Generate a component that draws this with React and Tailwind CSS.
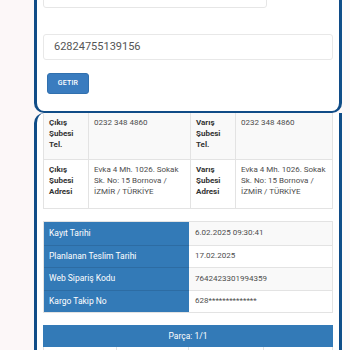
const infoRows = [
  { label: "Kayıt Tarihi", value: "6.02.2025 09:30:41" },
  { label: "Planlanan Teslim Tarihi", value: "17.02.2025" },
  { label: "Web Sipariş Kodu", value: "7642423301994359" },
  { label: "Kargo Takip No", value: "628**************" },
];

const Label = ({ lines }) => (
  <div className="px-[5px] pt-[4px] font-bold text-[#333] text-[8px] leading-[11px]">
    {lines.map((l) => (
      <div key={l}>{l}</div>
    ))}
  </div>
);

const Value = ({ lines, border = true }) => (
  <div
    className={`px-[5px] pt-[4px] text-[#4d4d4d] text-[8px] leading-[11px] whitespace-nowrap ${
      border ? "border-r border-[#e3e3e3]" : ""
    }`}
  >
    {lines.map((l) => (
      <div key={l}>{l}</div>
    ))}
  </div>
);

const address = ["Evka 4 Mh. 1026. Sokak", "Sk. No: 15 Bornova /", "İZMİR / TÜRKİYE"];

export default function App() {
  return (
    <div
      className="w-[350px] h-[350px] overflow-hidden bg-[#fcf7f8] pl-[34px] pr-[8px]"
      style={{ fontFamily: "Roboto, 'Noto Sans', sans-serif" }}
    >
      {/* search card */}
      <div className="bg-white border-x-[3px] border-b-2 border-[#104c87] rounded-b-[10px] px-[6px] pb-[17px] overflow-hidden">
        <div className="mt-[-22px] h-[30px] w-[224px] border border-[#e6e6e6] rounded-[3px]" />
        <div className="mt-[26px] h-[26px] border border-[#e8e8e8] rounded-[3px] flex items-center pl-[10px] text-[11px] text-[#555]">
          62824755139156
        </div>
        <button className="mt-[13px] ml-[4px] h-[21px] w-[42px] rounded-[3px] bg-[#3a7cbf] border border-[#3170ae] text-white text-[7px] font-medium tracking-[0.2px]">
          GETIR
        </button>
      </div>

      {/* result card */}
      <div className="h-[240px] bg-white border-x-[3px] border-[#104c87] rounded-tl-[10px] px-[6px]">
        <div className="border-x border-b border-[#e3e3e3]">
          <div className="grid grid-cols-[45px_102px_45px_92px] h-[47px] bg-[#f9f9f9] border-b border-[#e3e3e3]">
            <div className="border-r border-[#e3e3e3]">
              <Label lines={["Çıkış", "Şubesi", "Tel."]} />
            </div>
            <Value lines={["0232 348 4860"]} />
            <div className="border-r border-[#e3e3e3]">
              <Label lines={["Varış", "Şubesi", "Tel."]} />
            </div>
            <Value lines={["0232 348 4860"]} border={false} />
          </div>
          <div className="grid grid-cols-[45px_102px_45px_92px] h-[48px] bg-white">
            <div className="border-r border-[#e3e3e3]">
              <Label lines={["Çıkış", "Şubesi", "Adresi"]} />
            </div>
            <Value lines={address} />
            <div className="border-r border-[#e3e3e3]">
              <Label lines={["Varış", "Şubesi", "Adresi"]} />
            </div>
            <Value lines={address} border={false} />
          </div>
        </div>

        <div className="mt-[12px] border border-[#e3e3e3]">
          {infoRows.map((r, i) => (
            <div
              key={r.label}
              className={`grid grid-cols-[145px_1fr] h-[22.5px] ${
                i > 0 ? "border-t border-[#e3e3e3]" : ""
              }`}
            >
              <div
                className={`bg-[#337ab7] text-white text-[8.5px] flex items-center pl-[5px] ${
                  i > 0 ? "border-t border-[#2d6ca3] -mt-px" : ""
                }`}
              >
                {r.label}
              </div>
              <div
                className={`${
                  i % 2 === 0 ? "bg-[#f9f9f9]" : "bg-white"
                } text-[#4d4d4d] text-[8px] flex items-center pl-[6px]`}
              >
                {r.value}
              </div>
            </div>
          ))}
        </div>

        <div className="mt-[12px] h-[22px] bg-[#337ab7] text-white text-[8.5px] flex items-center justify-center">
          Parça: 1/1
        </div>
        <div className="grid grid-cols-[73px_72px_75px_1fr] h-[20px] border-x border-[#e3e3e3]">
          <div className="border-r border-[#e3e3e3]" />
          <div className="border-r border-[#e3e3e3]" />
          <div className="border-r border-[#e3e3e3]" />
          <div />
        </div>
      </div>
    </div>
  );
}
